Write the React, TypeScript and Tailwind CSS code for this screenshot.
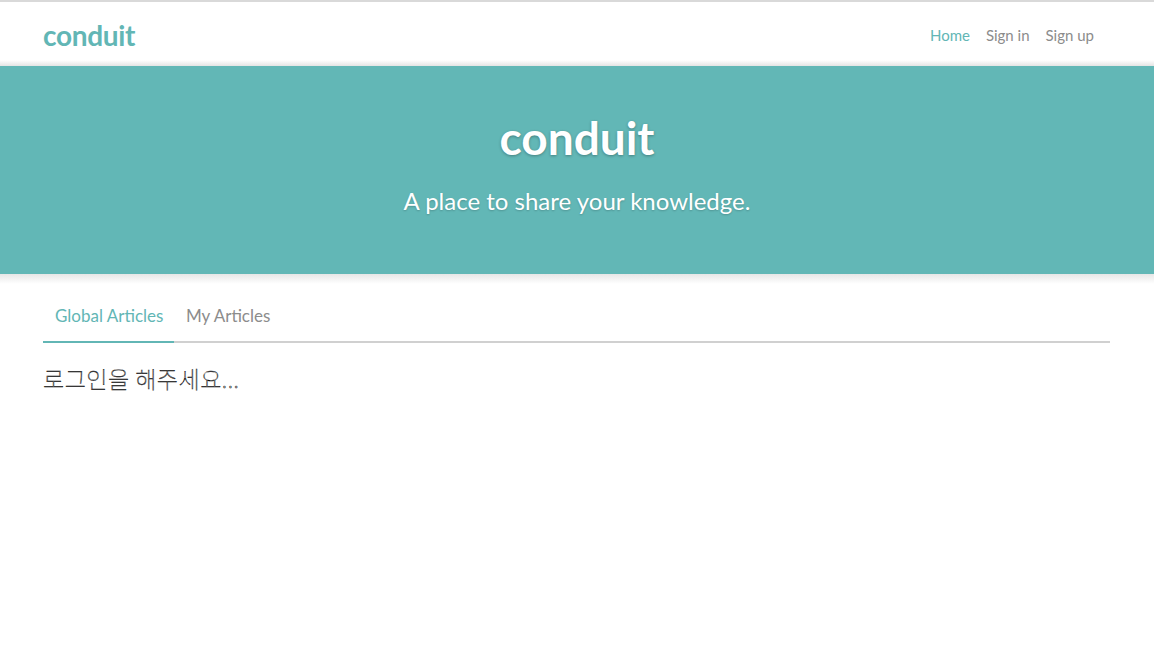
export default function App() {
  return (
    <div
      className="min-h-[670px] bg-white border-t-2 border-[#d9d9d9]"
      style={{ fontFamily: '"Source Sans Pro", Lato, "Noto Sans", sans-serif' }}
    >
      {/* Navbar */}
      <nav className="h-[64px] flex items-center justify-between pl-[43px] pr-[44px]">
        <a className="text-[28px] font-bold text-[#62b6b5] leading-none mt-[2px] tracking-[-0.3px]">
          conduit
        </a>
        <ul className="flex items-center gap-[16px] text-[15px] mt-[2px]">
          <li className="text-[#62b6b5]">Home</li>
          <li className="text-[#8c8c8c]">Sign in</li>
          <li className="text-[#8c8c8c] pr-[16px]">Sign up</li>
        </ul>
      </nav>

      {/* Banner */}
      <div className="h-[208px] bg-[#62b7b6] flex flex-col items-center text-white relative">
        <div className="absolute -top-[6px] left-0 right-0 h-[6px] bg-gradient-to-b from-transparent to-[#e4e4e4]" />
        <h1 className="mt-[49px] text-[46px] font-bold leading-none [text-shadow:0_1px_3px_rgba(0,0,0,0.3)]">
          conduit
        </h1>
        <p className="mt-[28px] text-[24px] leading-none [text-shadow:0_1px_2px_rgba(0,0,0,0.2)]">
          A place to share your knowledge.
        </p>
        <div className="absolute -bottom-[10px] left-0 right-0 h-[10px] bg-gradient-to-b from-[#e6e6e6] to-transparent" />
      </div>

      {/* Feed */}
      <div className="pl-[43px] pr-[44px] mt-[33px]">
        <div className="flex border-b-2 border-[#d0d0d0] text-[17px] leading-none">
          <div className="px-[12px] pb-[17px] text-[#62b6b5] border-b-2 border-[#62b6b5] -mb-[2px] w-[131px] whitespace-nowrap">
            Global Articles
          </div>
          <div className="px-[12px] pb-[17px] text-[#8c8c8c] whitespace-nowrap">My Articles</div>
        </div>
        <p
          className="mt-[24px] text-[23px] font-thin text-white leading-none tracking-[0.5px] [-webkit-text-stroke:0.45px_#000]"
          style={{ fontFamily: '"Noto Sans CJK KR", sans-serif' }}
        >
          로그인을 해주세요...
        </p>
      </div>
    </div>
  );
}
